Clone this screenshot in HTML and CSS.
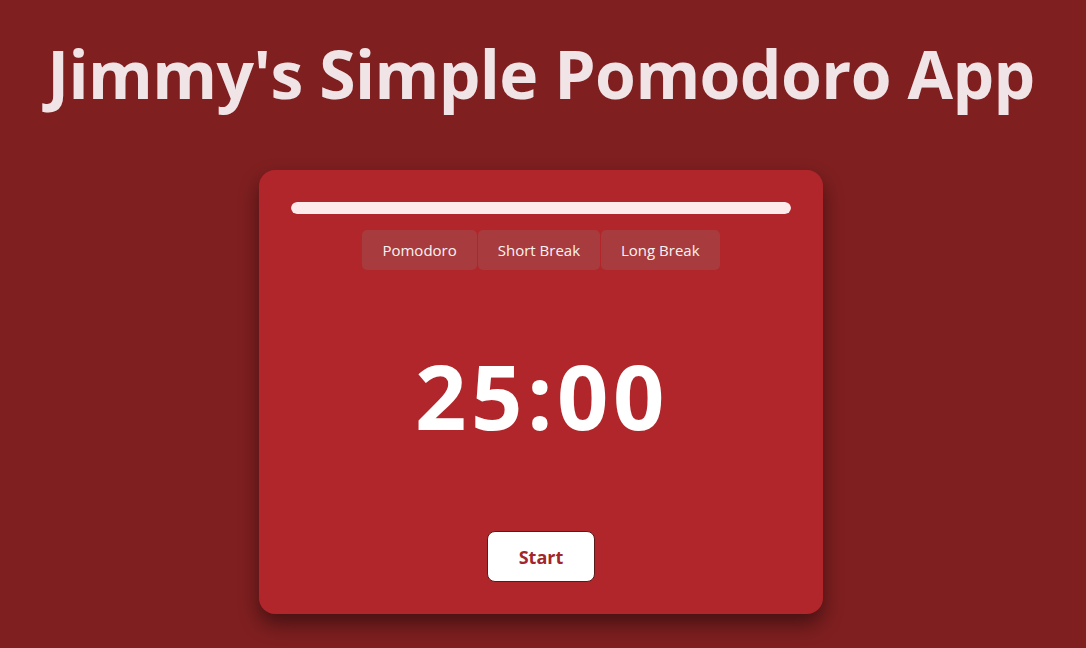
FILE: index.html
```html
<!DOCTYPE html>
<html lang="en">
<head>
<meta charset="utf-8">
<title>Jimmy's Simple Pomodoro App</title>
<link rel="stylesheet" href="styles.css">
</head>
<body>
  <h1 class="title">Jimmy's Simple Pomodoro App</h1>
  <main class="card">
    <div class="progress"><div class="progress-fill" style="width:100%"></div></div>
    <div class="tabs">
      <button class="tab">Pomodoro</button>
      <button class="tab">Short Break</button>
      <button class="tab">Long Break</button>
    </div>
    <div class="timer">25:00</div>
    <div class="actions">
      <button class="start">Start</button>
    </div>
  </main>
</body>
</html>
```
FILE: styles.css
```css
html, body {
  margin: 0;
  padding: 0;
}
body {
  background: #7f1f20;
  font-family: "Open Sans", "Noto Sans", sans-serif;
  color: #fff;
  height: 648px;
  overflow: hidden;
  padding-right: 4px;
}
.title {
  margin: 0;
  padding-top: 28px;
  height: 142px;
  box-sizing: border-box;
  text-align: center;
  font-size: 66px;
  line-height: 90px;
  font-weight: 700;
  color: #f0e4e6;
  letter-spacing: -0.6px;
}
.card {
  width: 564px;
  height: 444px;
  box-sizing: border-box;
  margin: 28px auto 0;
  padding: 32px;
  background: #b1262a;
  border-radius: 16px;
  box-shadow: 0 10px 20px rgba(0, 0, 0, 0.45);
  display: flex;
  flex-direction: column;
  align-items: center;
}
.progress {
  width: 100%;
  height: 12px;
  border-radius: 6px;
  background: rgba(255, 255, 255, 0.2);
  overflow: hidden;
}
.progress-fill {
  height: 100%;
  background: #fdeaea;
  border-radius: 6px;
}
.tabs {
  display: flex;
  gap: 1px;
  margin-top: 16px;
}
.tab {
  height: 40px;
  padding: 0 20px;
  border: none;
  border-radius: 5px;
  background: #a83b3d;
  color: #fbf3f3;
  font-family: inherit;
  font-size: 15px;
}
.timer {
  flex: 1;
  display: flex;
  align-items: center;
  justify-content: center;
  padding-bottom: 12px;
  padding-left: 2px;
  font-size: 90px;
  font-weight: 700;
  color: #fff;
  letter-spacing: 4.5px;
}
.actions {
  display: flex;
  justify-content: center;
}
.start {
  width: 108px;
  height: 51px;
  background: #fff;
  border: 1px solid #5a1a1a;
  border-radius: 8px;
  color: #a3262a;
  font-family: inherit;
  font-size: 18px;
  font-weight: 700;
}
```
